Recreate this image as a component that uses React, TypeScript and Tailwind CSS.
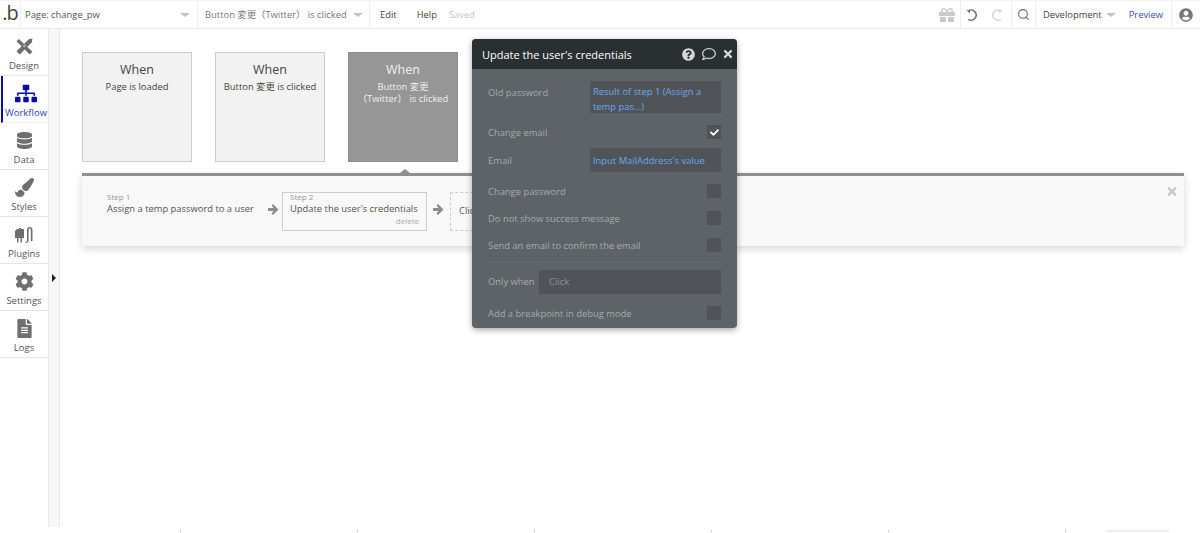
import React from 'react';
import { FaSitemap, FaDatabase, FaPaintBrush, FaCog, FaFileAlt, FaGift, FaUserCircle, FaQuestionCircle, FaRegComment, FaTimes, FaCheck } from 'react-icons/fa';
import { Search } from 'lucide-react';

const ToolsIcon = ({ className }: { className?: string }) => (
  <svg viewBox="0 0 20 18" className={className} fill="currentColor">
    <path d="M1.500 3.500 4 1l14.500 13.500-3 3L1.500 3.500z" />
    <path d="M14.500 1.200 18.500 .5 17.800 4.500 5 17.500 1.500 14z" />
    <path d="M7.800 8.200 10 6 12 8 9.800 10.200z" fill="#fff" opacity=".35" />
  </svg>
);

const PlugIcon = ({ className }: { className?: string }) => (
  <svg viewBox="0 0 20 17" className={className} fill="currentColor">
    <path d="M3 3h2v-1h2v1h3v9H8v4.500H6.500V12h-2v4.500H3V12H1V5l2-2z" />
    <path d="M11 16.500c1.500 0 2-1 2-2.500V4c0-1.800 1-3 2.700-3s2.800 1.200 2.800 3v11h-1.700V4c0-1-.4-1.500-1.100-1.500S14.600 3 14.600 4v10.500c0 1.800-1.200 2.500-3.600 2.500z" />
  </svg>
);

const UndoIcon = ({ flip, className }: { flip?: boolean; className?: string }) => (
  <svg viewBox="0 0 16 16" className={className} fill="none" stroke="currentColor" strokeWidth="1.600" style={flip ? { transform: 'scaleX(-1)' } : undefined}>
    <path d="M4.200 3A5.800 5.800 0 1 1 3.800 13" />
    <path d="M1.500 2.500h4.200v3.800z" fill="currentColor" stroke="none" />
  </svg>
);

const StepArrow = ({ className }: { className: string }) => (
  <svg viewBox="0 0 11 11" className={`h-[11px] w-[11px] shrink-0 text-[#8c8c8c] ${className}`} fill="currentColor">
    <path d="M0 4h5.500L3.500 1.500 5 0l5.500 5.500L5 11 3.500 9.500 5.500 7H0z" />
  </svg>
);

const Caret = () => <span className="h-0 w-0 border-x-[5px] border-t-[4px] border-x-transparent border-t-[#c4c4c4]" />;

const navItems = [
  { label: 'Design', icon: <ToolsIcon className="h-[17px] w-[19px]" /> },
  { label: 'Workflow', icon: <FaSitemap className="h-[19px] w-[22px]" />, active: true },
  { label: 'Data', icon: <FaDatabase className="h-[19px] w-[15px]" /> },
  { label: 'Styles', icon: <FaPaintBrush className="h-[19px] w-[19px]" /> },
  { label: 'Plugins', icon: <PlugIcon className="h-[17px] w-[20px]" /> },
  { label: 'Settings', icon: <FaCog className="h-[19px] w-[19px]" /> },
  { label: 'Logs', icon: <FaFileAlt className="h-[19px] w-[15px]" /> },
];

const TopBar = () => (
  <div className="flex h-[29px] shrink-0 items-center border-t border-b border-t-[#f4f4f4] border-b-[#e8e8e8] bg-white text-[9.4px] text-[#555]">
    <div className="flex h-full w-[21px] items-start justify-center border-r border-[#eee] pt-[2px] text-[20px] leading-[20px] tracking-[-1px] text-[#444]">
      .b
    </div>
    <div className="flex h-full w-[177px] items-center justify-between border-r border-[#eee] pr-[7px] pl-[4px]">
      <span className="pt-[2px]">Page: change_pw</span>
      <Caret />
    </div>
    <div className="flex h-full w-[172px] items-center justify-between border-r border-[#eee] pr-[6px] pl-[7px] text-[#777]">
      <span className="pt-[2px] whitespace-nowrap">Button 変更（Twitter） is clicked</span>
      <Caret />
    </div>
    <span className="ml-[10px] pt-[2px] text-[#444]">Edit</span>
    <span className="ml-[20px] pt-[2px] text-[#444]">Help</span>
    <span className="ml-[12px] pt-[2px] text-[#c4c4c4]">Saved</span>
    <div className="ml-auto flex h-full items-center">
      <div className="flex h-full w-[23px] items-center border-r border-[#eee] pl-[1px]">
        <FaGift className="h-[16px] w-[16px] text-[#c9c9c9]" />
      </div>
      <div className="flex h-full w-[51px] items-center gap-[11px] border-r border-[#eee] pl-[4px]">
        <UndoIcon className="h-[14px] w-[14px] text-[#666]" />
        <UndoIcon flip className="h-[14px] w-[14px] text-[#d4d4d4]" />
      </div>
      <div className="flex h-full w-[24px] items-center justify-center border-r border-[#eee]">
        <Search className="h-[13px] w-[13px] text-[#666]" />
      </div>
      <span className="ml-[7px] pt-[2px] text-[#444]">Development</span>
      <span className="ml-[4px] flex"><Caret /></span>
      <span className="ml-[13px] pt-[2px] text-[#3b4aa8]">Preview</span>
      <div className="ml-[8px] flex h-full w-[29px] items-center justify-center border-l border-[#eee]">
        <FaUserCircle className="h-[14px] w-[14px] text-[#777]" />
      </div>
    </div>
  </div>
);

const Sidebar = () => (
  <div className="flex w-[48px] shrink-0 flex-col bg-white">
    {navItems.map((item) => (
      <div
        key={item.label}
        className={`flex h-[47px] flex-col items-center justify-end border-b pb-[2px] text-[9.5px] leading-[14px] ${
          item.active ? 'ml-[1px] border-l-[2px] border-b-[#eee] border-l-[#0a0aa8] pl-[1px] text-[#2a3fb0]' : 'border-b-[#e6e6e6] text-[#555]'
        }`}
      >
        <span className={`mb-[2px] flex h-[22px] items-center ${item.active ? 'text-[#0a0aa8]' : 'text-[#6f6f6f]'}`}>{item.icon}</span>
        {item.label}
      </div>
    ))}
  </div>
);

const Gutter = () => (
  <div className="relative w-[12px] shrink-0 border-x border-[#e8e8e8] bg-[#f7f7f7]">
    <span className="absolute top-[245px] left-[3px] h-0 w-0 border-y-[4px] border-l-[4px] border-y-transparent border-l-[#222]" />
  </div>
);

const EventCard = ({ title, active }: { title: string; active?: boolean }) => (
  <div
    className={`flex h-[110px] w-[110px] flex-col items-center border px-[2px] pt-[8px] text-center ${
      active ? 'border-[#8c8c8c] bg-[#969696] text-[#f0f0f0]' : 'border-[#c9cdcf] bg-[#f2f2f2] text-[#444]'
    }`}
  >
    <div className="text-[12.5px] leading-[18px]">When</div>
    <div className="mt-[2px] text-[9.4px] leading-[12px] whitespace-pre-line">{title}</div>
  </div>
);

const StepBar = () => (
  <div className="relative mt-[11px] h-[73px] w-[1102px] border-t-[3px] border-[#8f8f8f] bg-[#f8f8f8] shadow-[0_3px_8px_rgba(0,0,0,0.16)]">
    <span className="absolute -top-[7px] left-[318px] h-0 w-0 border-x-[5px] border-b-[4px] border-x-transparent border-b-[#8f8f8f]" />
    <FaTimes className="absolute top-[9px] right-[6px] h-[13px] w-[12px] text-[#c4c8cb]" />
    <div className="flex items-start pt-[16px] pl-[25px]">
      <div className="w-[161px] pt-[1px] text-[#555]">
        <div className="text-[8px] leading-[8px] text-[#999]">Step 1</div>
        <div className="text-[9.4px] leading-[16px] whitespace-nowrap">Assign a temp password to a user</div>
      </div>
      <StepArrow className="mt-[12px] mr-[3px]" />
      <div className="h-[39px] w-[145px] border border-[#c9cdcf] px-[7px] text-[#555]">
        <div className="text-[8px] leading-[8px] text-[#999]">Step 2</div>
        <div className="text-[9.4px] leading-[16px] whitespace-nowrap">Update the user's credentials</div>
        <div className="-mt-[1px] text-right text-[8px] leading-[9px] text-[#aaa]">delete</div>
      </div>
      <StepArrow className="mt-[12px] mr-[6px] ml-[6px]" />
      <div className="flex h-[39px] w-[60px] items-center border border-dashed border-[#c9cdcf] pl-[8px] text-[9.4px] text-[#555]">Click</div>
    </div>
  </div>
);

const Check = ({ checked }: { checked?: boolean }) => (
  <span className="flex h-[14px] w-[14px] items-center justify-center bg-[#505458]">
    {checked && <FaCheck className="h-[9px] w-[9px] text-white" />}
  </span>
);

const CheckRow = ({ label, checked, className }: { label: string; checked?: boolean; className: string }) => (
  <div className={`flex h-[14px] items-center justify-between ${className}`}>
    <span className="pt-[2px]">{label}</span>
    <Check checked={checked} />
  </div>
);

const CredentialsPanel = () => (
  <div className="absolute top-[10px] left-[412px] h-[289px] w-[265px] overflow-hidden rounded-[4px] bg-[#5d6367] text-[9.4px] leading-[14px] text-[#a6aaad] shadow-[0_2px_6px_rgba(0,0,0,0.35)]">
    <div className="flex h-[30px] items-center bg-[#2a3032] pr-[4px] pl-[10px] text-white">
      <span className="pt-[2px] text-[11px]">Update the user's credentials</span>
      <FaQuestionCircle className="ml-auto h-[13px] w-[13px] text-[#d4d7d9]" />
      <FaRegComment className="ml-[7px] h-[14px] w-[14px] text-[#c4c8cb]" />
      <FaTimes className="ml-[7px] h-[12px] w-[10px] text-[#d4d7d9]" />
    </div>
    <div className="px-[16px]">
      <div className="mt-[12px] flex justify-between">
        <span className="pt-[5px]">Old password</span>
        <div className="h-[32px] w-[131px] bg-[#505458] px-[3px] pt-[3px] leading-[15px] text-[#6ba6ea]">Result of step 1 (Assign a temp pas...)</div>
      </div>
      <CheckRow label="Change email" checked className="mt-[12px]" />
      <div className="mt-[9px] flex items-center justify-between">
        <span className="pt-[2px]">Email</span>
        <div className="flex h-[24px] w-[131px] items-center bg-[#505458] px-[3px] pt-[1px] text-[#6ba6ea]">Input MailAddress's value</div>
      </div>
      <CheckRow label="Change password" className="mt-[12px]" />
      <CheckRow label="Do not show success message" className="mt-[13px]" />
      <CheckRow label="Send an email to confirm the email" className="mt-[13px]" />
      <div className="mt-[10px] flex items-center justify-between border-t border-[#64696d] pt-[7px]">
        <span>Only when</span>
        <div className="flex h-[24px] w-[182px] items-center bg-[#505458] pl-[10px] text-[#8c9094]">Click</div>
      </div>
      <CheckRow label="Add a breakpoint in debug mode" className="mt-[12px]" />
    </div>
  </div>
);

const BottomStrip = () => (
  <div className="flex h-[6px] shrink-0 items-end bg-white pb-[1px] pl-[180px]">
    <div className="flex gap-[176px]">
      {[0, 1, 2, 3, 4, 5].map((i) => (
        <span key={i} className="h-[2px] w-px bg-[#c8c8c8]" />
      ))}
    </div>
    <span className="ml-[40px] h-[2px] w-[63px] bg-[#eeeeee]" />
  </div>
);

export default function App() {
  return (
    <div className="flex h-[533px] w-[1200px] flex-col overflow-hidden bg-white font-['Open_Sans','Noto_Sans_CJK_JP',sans-serif]">
      <TopBar />
      <div className="flex min-h-0 flex-1">
        <Sidebar />
        <Gutter />
        <div className="relative flex-1 pt-[23px] pl-[22px]">
          <div className="flex gap-[23px]">
            <EventCard title="Page is loaded" />
            <EventCard title="Button 変更 is clicked" />
            <EventCard title={'Button 変更\n（Twitter） is clicked'} active />
          </div>
          <StepBar />
          <CredentialsPanel />
        </div>
      </div>
      <BottomStrip />
    </div>
  );
}
